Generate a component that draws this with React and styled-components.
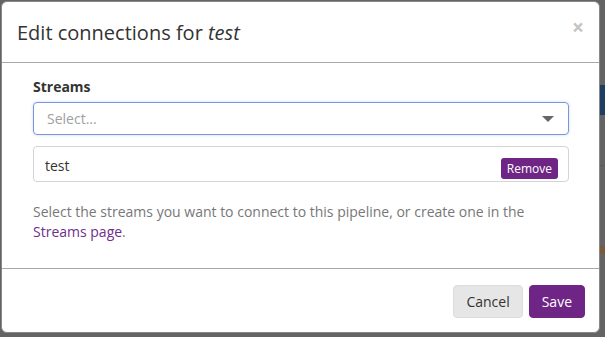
import React from 'react';
import styled, { createGlobalStyle } from 'styled-components';

const GlobalStyle = createGlobalStyle`
  html, body {
    margin: 0;
    padding: 0;
    background: #646464;
    font-family: 'Open Sans', 'Liberation Sans', sans-serif;
    font-size: 14px;
    color: #333;
  }
`;

const Backdrop = styled.div`
  display: flex;
  flex-direction: row;
  width: 605px;
  height: 337px;
  padding: 1px 0 0 1px;
  box-sizing: border-box;
  background: #646464;
  overflow: hidden;
`;

const Gutter = styled.div`
  flex: 1;
  display: flex;
  flex-direction: column;
  padding-top: 84px;
`;

const PageMark = styled.div`
  height: ${(p) => p.h}px;
  margin-bottom: ${(p) => p.mb || 0}px;
  background: ${(p) => p.color};
`;

const Modal = styled.div`
  width: 599px;
  height: 332px;
  display: flex;
  flex-direction: column;
  background: #fff;
  border: 1px solid #888;
  border-radius: 6px;
  box-sizing: border-box;
  overflow: hidden;
`;

const Header = styled.div`
  height: 60px;
  flex: none;
  display: flex;
  align-items: center;
  justify-content: space-between;
  padding: 0 15px 0 15px;
  border-bottom: 1px solid #a8a8a8;
`;

const Title = styled.h4`
  margin: 0;
  font-size: 20px;
  font-weight: 400;
  color: #333;
  em {
    font-style: italic;
  }
`;

const Close = styled.span`
  font-size: 21px;
  font-weight: 700;
  color: #c4c4c4;
  line-height: 1;
  margin-top: -10px;
`;

const Body = styled.div`
  flex: 1;
  padding: 14px 30px 0 31px;
`;

const Label = styled.div`
  font-weight: 700;
  font-size: 14px;
  color: #333;
  line-height: 20px;
  margin-bottom: 5px;
`;

const Select = styled.div`
  height: 33px;
  display: flex;
  align-items: center;
  justify-content: space-between;
  padding: 0 14px 0 13px;
  border: 1px solid #7b95dc;
  border-radius: 4px;
  box-shadow: 0 0 3px rgba(110, 140, 220, 0.35);
  box-sizing: border-box;
  color: #a0a0a0;
`;

const Caret = styled.span`
  width: 0;
  height: 0;
  border-left: 6px solid transparent;
  border-right: 6px solid transparent;
  border-top: 6px solid #666;
`;

const Item = styled.div`
  margin-top: 11px;
  height: 36px;
  display: flex;
  align-items: center;
  justify-content: space-between;
  padding: 0 10px 0 11px;
  border: 1px solid #d4d4d4;
  border-radius: 4px;
  box-sizing: border-box;
  color: #333;
`;

const ItemName = styled.span`
  margin-top: 2px;
`;

const SmallButton = styled.span`
  margin-top: 9px;
  background: #6e2585;
  color: #fff;
  font-size: 12px;
  line-height: 21px;
  padding: 0 6px;
  border-radius: 3px;
`;

const Help = styled.p`
  margin: 20px 0 0;
  color: #777;
  line-height: 20px;
  a {
    color: #702d8a;
    text-decoration: none;
  }
`;

const Footer = styled.div`
  height: 64px;
  flex: none;
  display: flex;
  align-items: flex-start;
  justify-content: flex-end;
  gap: 6px;
  padding: 16px 14px 0 0;
  border-top: 1px solid #a8a8a8;
  box-sizing: border-box;
`;

const Button = styled.button`
  height: 33px;
  padding: 0 12px;
  font-family: inherit;
  font-size: 14px;
  border-radius: 4px;
  border: 1px solid ${(p) => (p.primary ? '#6e2585' : '#dcdcdc')};
  background: ${(p) => (p.primary ? '#6e2585' : '#e6e6e6')};
  color: ${(p) => (p.primary ? '#fff' : '#333')};
`;

export default function App() {
  return (
    <>
      <GlobalStyle />
      <Backdrop>
        <Modal>
          <Header>
            <Title>
              Edit connections for <em>test</em>
            </Title>
            <Close>×</Close>
          </Header>
          <Body>
            <Label>Streams</Label>
            <Select>
              <span>Select...</span>
              <Caret />
            </Select>
            <Item>
              <ItemName>test</ItemName>
              <SmallButton>Remove</SmallButton>
            </Item>
            <Help>
              Select the streams you want to connect to this pipeline, or create one in the{' '}
              <a href="#">Streams page</a>.
            </Help>
          </Body>
          <Footer>
            <Button>Cancel</Button>
            <Button primary>Save</Button>
          </Footer>
        </Modal>
        <Gutter>
          <PageMark h={30} mb={50} color="#1d3d63" />
          <PageMark h={1} mb={80} color="#5a5a5a" />
          <PageMark h={8} color="#7a5a3a" />
        </Gutter>
      </Backdrop>
    </>
  );
}
